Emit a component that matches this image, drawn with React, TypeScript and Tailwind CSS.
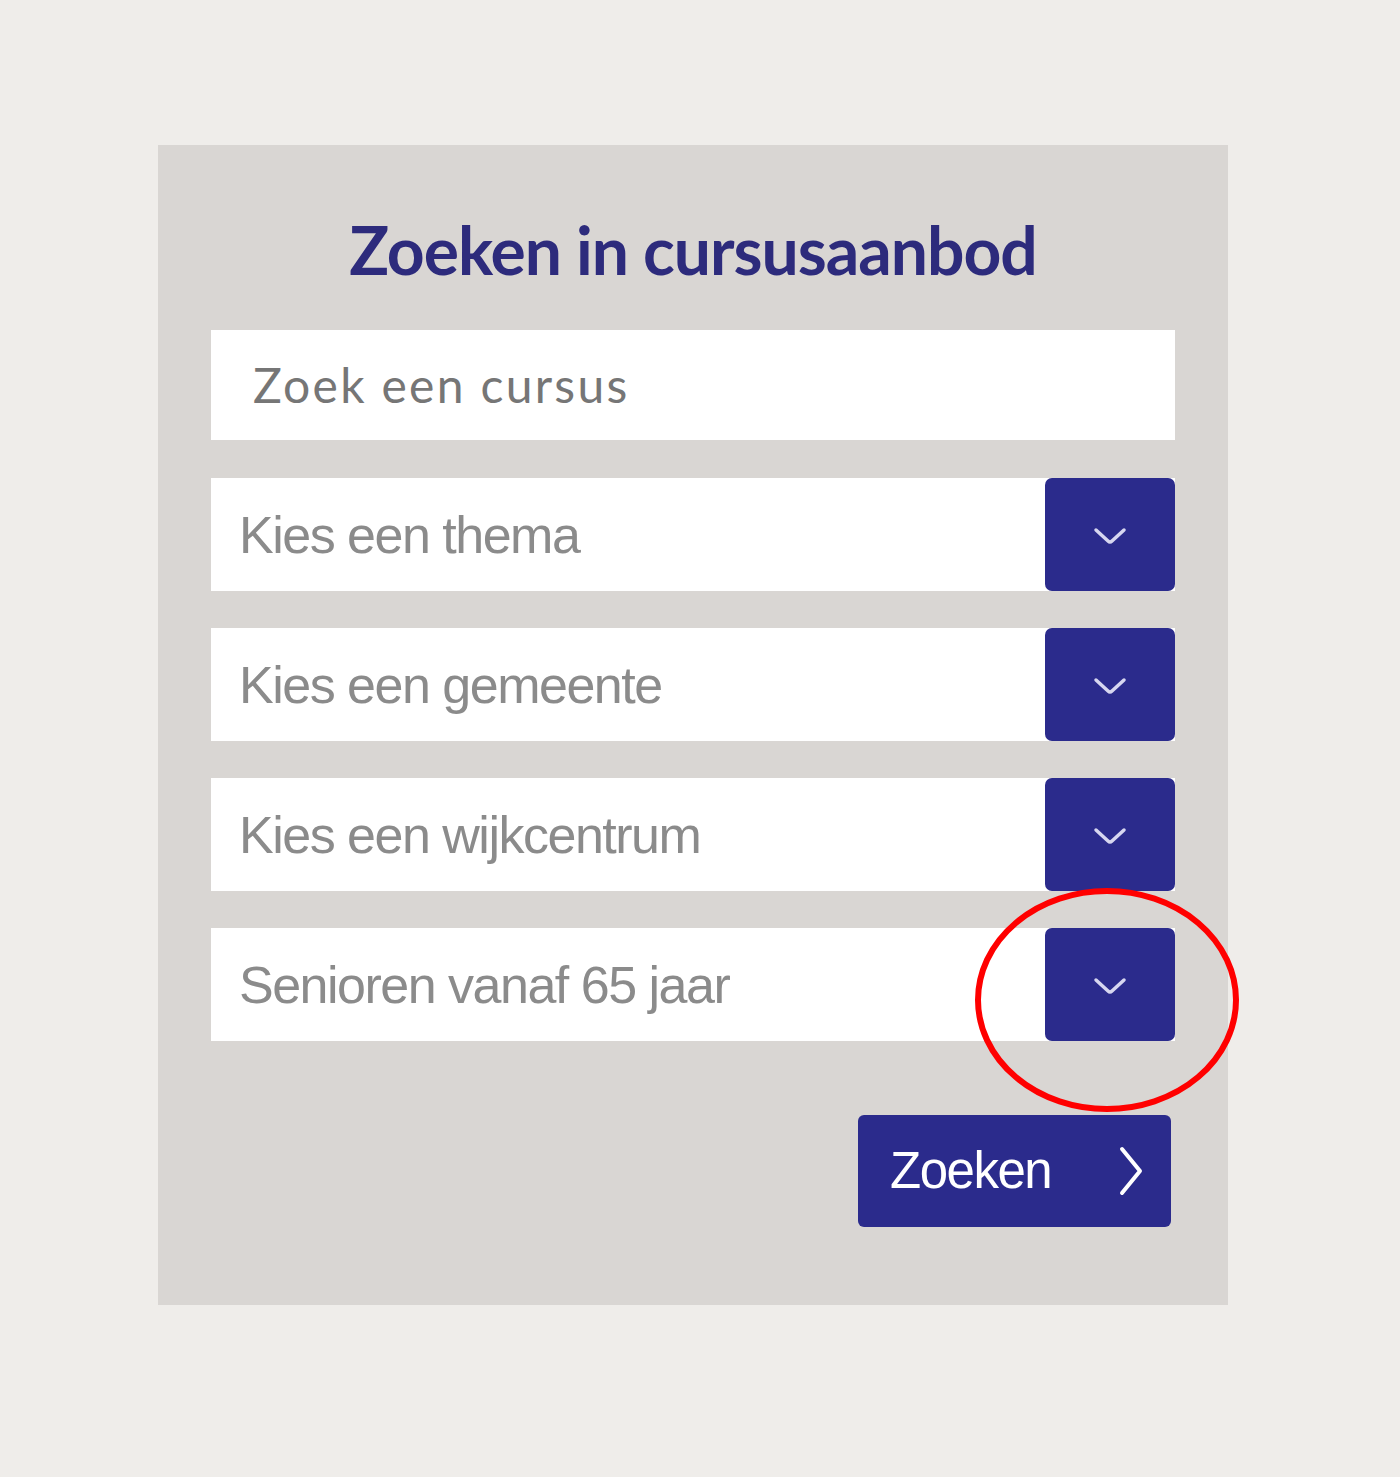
import React from "react";

function ChevronDown() {
  return (
    <svg width="42" height="26" viewBox="0 0 42 26" fill="none">
      <path d="M7 8 L19 19 Q21 21 23 19 L35 8" stroke="#d6d6f0" strokeWidth="3.5" strokeLinecap="round" strokeLinejoin="round" />
    </svg>
  );
}

function ChevronRight() {
  return (
    <svg width="28" height="52" viewBox="0 0 28 52" fill="none">
      <path d="M5 4 L23 26 L5 48" stroke="#ffffff" strokeWidth="4" strokeLinecap="round" strokeLinejoin="round" />
    </svg>
  );
}

function Select({ label }: { label: string }) {
  return (
    <div className="flex h-[113px] w-full shrink-0 bg-white">
      <div className="flex flex-1 items-center pl-[28px] text-[52px] tracking-[-1.5px] text-[#8b8b8b] [font-family:'Liberation_Sans',Arial,sans-serif]">
        {label}
      </div>
      <div className="flex w-[130px] items-center justify-center rounded-[7px] bg-[#2b2b8c]">
        <ChevronDown />
      </div>
    </div>
  );
}

export default function App() {
  return (
    <div className="relative min-h-[1477px] w-[1400px] bg-[#efedea] pt-[145px]">
      <div className="ml-[158px] flex h-[1160px] w-[1070px] flex-col bg-[#d9d6d3] px-[53px] pt-[72px]">
        <h1 className="shrink-0 text-center text-[66px] font-bold leading-none tracking-[-1px] text-[#2d2b7c] [font-family:Lato,'Open_Sans',sans-serif]">
          Zoeken in cursusaanbod
        </h1>
        <div className="mt-[47px] flex h-[110px] w-full shrink-0 items-center bg-white pl-[42px] text-[48px] tracking-[2.3px] text-[#767676] [font-family:Lato,'Open_Sans',sans-serif]">
          Zoek een cursus
        </div>
        <div className="mt-[38px] flex shrink-0 flex-col gap-[37px]">
          <Select label="Kies een thema" />
          <Select label="Kies een gemeente" />
          <Select label="Kies een wijkcentrum" />
          <Select label="Senioren vanaf 65 jaar" />
        </div>
        <div className="mt-[74px] flex shrink-0 justify-end pr-[4px]">
          <div className="flex h-[112px] w-[313px] items-center justify-between rounded-[6px] bg-[#2b2b8c] pl-[32px] pr-[26px] text-[51px] tracking-[-1.5px] text-white [font-family:'Liberation_Sans',Arial,sans-serif]">
            <span>Zoeken</span>
            <ChevronRight />
          </div>
        </div>
      </div>
      <svg className="absolute left-[972px] top-[885px]" width="270" height="230" viewBox="0 0 270 230" fill="none">
        <ellipse cx="135" cy="115" rx="129" ry="109" stroke="#ff0000" strokeWidth="6" />
      </svg>
    </div>
  );
}
